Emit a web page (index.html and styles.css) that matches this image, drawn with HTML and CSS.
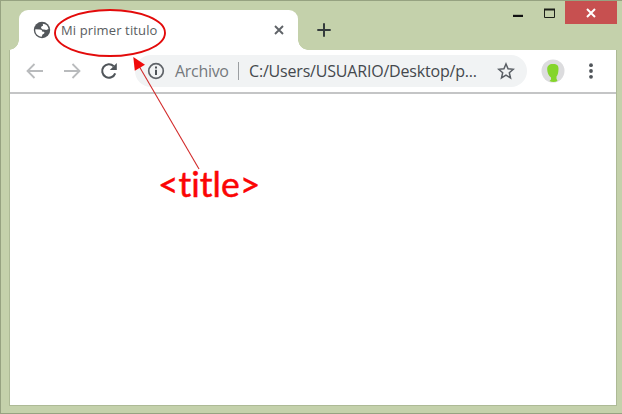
FILE: index.html
```html
<!DOCTYPE html>
<html lang="es">
<head>
<meta charset="utf-8">
<title>Mi primer titulo</title>
<link rel="stylesheet" href="styles.css">
</head>
<body>
<div class="window">
  <header class="tabstrip">
    <div class="tab">
      <svg class="globe" width="18" height="18" viewBox="0 0 18 18"><circle cx="9" cy="9" r="8.2" fill="#53575b"/><path d="M2.300 8.300l4.600.2c1.600.1 2.300.9 2.100 2l1.700.3c1 .3.900 1.500.1 2l-1.300.8-.8 2.100C4.800 15.500 1.900 12.500 2.300 8.300zM9.800 2.700C13 2.900 15.200 5 15.500 8l-2.300 1-2-.5-1.500.1-1.700-1.500.4-1.500 1.600-.8z" fill="#fff"/></svg>
      <span class="tab-title">Mi primer titulo</span>
      <svg class="close-tab" width="10" height="10" viewBox="0 0 10 10"><path d="M1 1l8 8M9 1l-8 8" stroke="#5f6368" stroke-width="1.9"/></svg>
    </div>
    <svg class="new-tab" width="14" height="14" viewBox="0 0 14 14"><path d="M7 .3v13.400M.3 7h13.400" stroke="#343b3c" stroke-width="2"/></svg>
    <div class="controls">
      <svg width="57" height="23" viewBox="0 0 57 23"><path d="M5 14.900h10" stroke="#111" stroke-width="2.200"/><path d="M36.500 8.500h10v8h-10z" fill="none" stroke="#1c1f19"/><path d="M36 8.500h11" stroke="#1c1f19" stroke-width="2"/></svg>
      <div class="close-window"><svg width="10" height="10" viewBox="0 0 10 10"><path d="M1 1l8 8M9 1l-8 8" stroke="#fff" stroke-width="2"/></svg></div>
    </div>
  </header>
  <main class="page">
    <nav class="toolbar">
      <svg class="back" width="18" height="16" viewBox="0 0 18 16"><path d="M17 8H2M8.500 1L1.500 8l7 7" fill="none" stroke="#b9bbbd" stroke-width="1.800"/></svg>
      <svg class="forward" width="18" height="16" viewBox="0 0 18 16"><path d="M1 8h15M9.500 1l7 7-7 7" fill="none" stroke="#b9bbbd" stroke-width="1.800"/></svg>
      <svg class="reload" width="18" height="18" viewBox="0 0 18 18"><path d="M15.200 11.300A6.700 6.700 0 1 1 13.700 4.300" fill="none" stroke="#50555a" stroke-width="2.100"/><path d="M16.800 1v7H9.800z" fill="#50555a"/></svg>
      <div class="address">
        <svg width="18" height="18" viewBox="0 0 18 18"><circle cx="9" cy="9" r="7.300" fill="none" stroke="#5f6368" stroke-width="1.700"/><path d="M9 7.700v5.200M9 4.500v2" stroke="#4d5257" stroke-width="2"/></svg>
        <span class="scheme">Archivo</span>
        <span class="divider"></span>
        <span class="url">C:/Users/USUARIO/Desktop/p...</span>
        <svg class="star" width="18" height="18" viewBox="0 0 18 18"><path d="M9 2l2.050 4.850 5.250.45-4 3.450 1.200 5.150L9 13.150 4.500 15.900l1.200-5.150-4-3.450 5.250-.45z" fill="none" stroke="#5a5f65" stroke-width="1.500"/></svg>
      </div>
      <svg class="avatar" width="24" height="24" viewBox="0 0 24 24"><circle cx="12" cy="12" r="11.500" fill="#dcdcde"/><path d="M12 5c4.200 0 5.700 1.900 5.500 5-.1 3.500-.6 6-2 7.500v2.300l1 2.200q-4 2-8 0l1.500-1.500v-2C7.500 17 6.300 13.500 6.200 10.500 6.100 6.900 8 5 12 5z" fill="#84d52b"/></svg>
      <svg width="4" height="16" viewBox="0 0 4 16" fill="#50555a"><circle cx="2" cy="2.200" r="1.900"/><circle cx="2" cy="8" r="1.900"/><circle cx="2" cy="13.800" r="1.900"/></svg>
    </nav>
  </main>
  <svg class="annotation" width="622" height="414" viewBox="0 0 622 414"><ellipse cx="110" cy="33" rx="55" ry="23" fill="none" stroke="#e30b0b" stroke-width="1.900"/><path d="M139 66L199 169" stroke="#d22a2a" stroke-width="1.100"/><path d="M133.300 57L145 64.800 134.800 70.700z" fill="#f00a0a"/></svg>
  <span class="label">&lt;title&gt;</span>
</div>
</body>
</html>
```
FILE: styles.css
```css
* { box-sizing: border-box; }
body { margin: 0; overflow: hidden; }
svg { display: block; flex: none; }
.window {
  position: relative;
  width: 622px;
  height: 414px;
  padding: 0 5px 7px 8px;
  background: #c4d1ab;
  border: 1px solid #96a281;
  border-right: 0;
  font-family: "Open Sans", "Noto Sans", sans-serif;
}
.tabstrip { display: flex; height: 49px; align-items: flex-start; }
.tab {
  position: relative;
  display: flex;
  align-items: center;
  width: 279px;
  height: 40px;
  margin: 9px 0 0 10px;
  padding: 0 14px;
  background: #fff;
  border-radius: 9px 9px 0 0;
}
.tab::before, .tab::after {
  content: "";
  position: absolute;
  bottom: 0;
  width: 10px;
  height: 10px;
}
.tab::before { left: -10px; background: radial-gradient(circle at 0 0, transparent 9.500px, #fff 10px); }
.tab::after { right: -10px; background: radial-gradient(circle at 100% 0, transparent 9.500px, #fff 10px); }
.tab-title { margin-left: 10px; font-size: 13px; letter-spacing: 0.120px; color: #595d61; white-space: nowrap; }
.close-tab { margin-left: auto; }
.new-tab { margin: 22px 0 0 19px; }
.controls { display: flex; margin-left: auto; }
.close-window {
  display: flex;
  align-items: center;
  justify-content: center;
  width: 52px;
  height: 23px;
  background: #c75050;
}
.page {
  width: 608px;
  height: 356px;
  background: #fff;
  border: solid #adba96;
  border-width: 0 1px 1px;
}
.toolbar {
  display: flex;
  align-items: center;
  height: 44px;
  padding: 0 23px 0 16px;
  border-bottom: 2px solid #c4c5c6;
}
.forward { margin-left: 19px; }
.reload { margin-left: 19px; }
.address {
  display: flex;
  align-items: center;
  width: 393px;
  height: 32px;
  margin-left: 17px;
  padding: 0 12px;
  border-radius: 16px;
  background: #f1f3f4;
  font-size: 16px;
  white-space: nowrap;
}
.scheme { margin-left: 10px; width: 63px; color: #75797d; letter-spacing: -0.300px; }
.divider { width: 1px; height: 18px; background: #9b9ea1; }
.url { margin-left: 10px; color: #44484d; letter-spacing: -0.190px; }
.star { margin-left: auto; }
.avatar { margin: 0 24px 0 14px; }
.annotation { position: absolute; left: -1px; top: -1px; }
.label {
  position: absolute;
  left: 157px;
  top: 161px;
  color: #fb0505;
  font: 35.500px/44px Lato, sans-serif;
  font-variant-ligatures: none;
  -webkit-text-stroke: 0.500px #fb0505;
}
```
